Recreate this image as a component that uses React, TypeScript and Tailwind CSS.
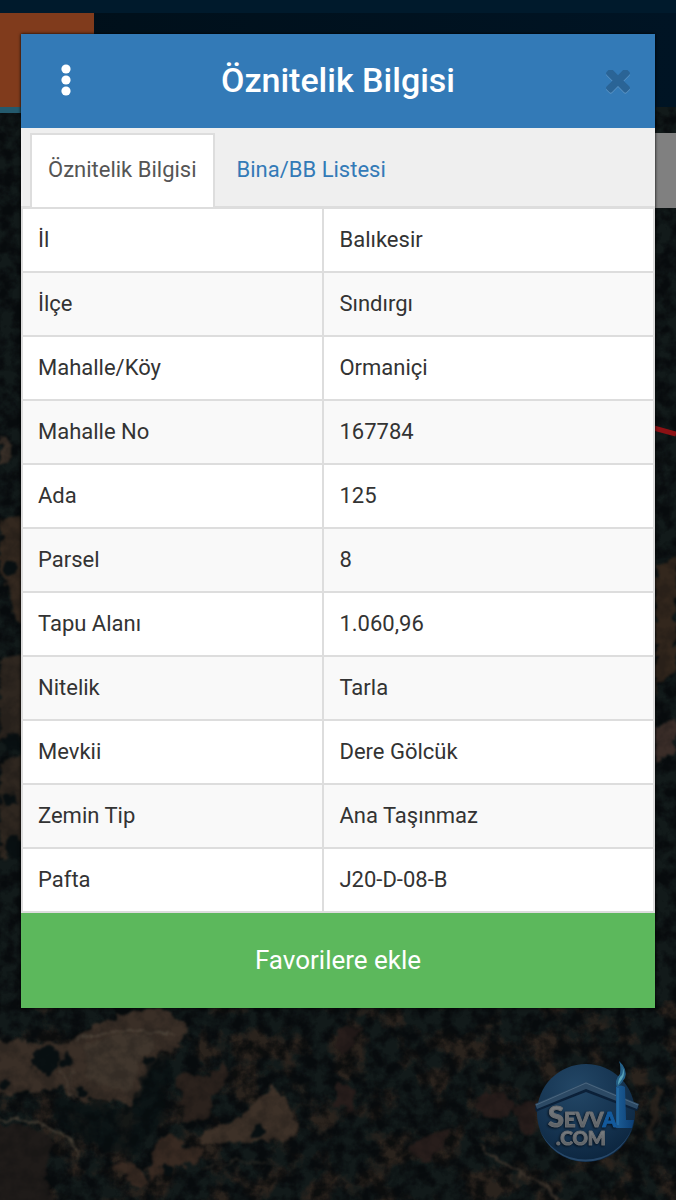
import React, { useState } from 'react';

interface Attribute {
  label: string;
  value: string;
}

const attributes: Attribute[] = [
  { label: 'İl', value: 'Balıkesir' },
  { label: 'İlçe', value: 'Sındırgı' },
  { label: 'Mahalle/Köy', value: 'Ormaniçi' },
  { label: 'Mahalle No', value: '167784' },
  { label: 'Ada', value: '125' },
  { label: 'Parsel', value: '8' },
  { label: 'Tapu Alanı', value: '1.060,96' },
  { label: 'Nitelik', value: 'Tarla' },
  { label: 'Mevkii', value: 'Dere Gölcük' },
  { label: 'Zemin Tip', value: 'Ana Taşınmaz' },
  { label: 'Pafta', value: 'J20-D-08-B' },
];

const tabs = [
  { id: 'attributes', label: 'Öznitelik Bilgisi' },
  { id: 'buildings', label: 'Bina/BB Listesi' },
];

const SatelliteMap: React.FC = () => (
  <svg
    className="absolute inset-0 w-full h-full"
    viewBox="0 0 676 1200"
    preserveAspectRatio="xMidYMid slice"
    aria-hidden="true"
  >
    <defs>
      <filter id="rough" x="-10%" y="-10%" width="120%" height="120%" colorInterpolationFilters="sRGB">
        <feTurbulence type="fractalNoise" baseFrequency="0.09" numOctaves="3" seed="4" result="n" />
        <feDisplacementMap in="SourceGraphic" in2="n" scale="14" xChannelSelector="R" yChannelSelector="G" />
        <feGaussianBlur stdDeviation="1.1" />
      </filter>
      <filter id="trees" x="0" y="0" width="100%" height="100%" colorInterpolationFilters="sRGB">
        <feTurbulence type="fractalNoise" baseFrequency="0.07" numOctaves="4" seed="11" />
        <feColorMatrix values="0 0 0 0 0.02  0 0 0 0 0.03  0 0 0 0 0.04  0 3 0 0 -1.1" />
      </filter>
      <filter id="scrub" x="0" y="0" width="100%" height="100%" colorInterpolationFilters="sRGB">
        <feTurbulence type="fractalNoise" baseFrequency="0.03" numOctaves="5" seed="23" />
        <feColorMatrix values="0 0 0 0 0.2  0 0 0 0 0.15  0 0 0 0 0.12  5 0 0 0 -2.4" />
      </filter>
    </defs>
    <rect width="676" height="1200" fill="#121a1a" />
    <rect y="1000" width="676" height="200" filter="url(#scrub)" opacity="0.75" />
    <rect width="676" height="1200" filter="url(#trees)" opacity="0.7" />

    {/* Tarlalar */}
    <g filter="url(#rough)">
      <path d="M0 438l14 8-4 14-10 4z" fill="#3c322a" />
      <path d="M0 520l24-4v112l-12-18-4-30-8-6z" fill="#33281f" />
      <path d="M0 660l24-6v84l-24 2zM0 765l24-12v84l-24 28z" fill="#2f2720" />
      <path d="M655 565l21-8v110l-21 24z" fill="#33271d" />
      <path d="M655 728l21-10v34l-21 8z" fill="#3a2d28" />
      <path d="M-4 1040l30 2 40 2 30-18 30-14 36-4 18 12 10 16-10 8-16 6-14 18-10 24-12 14-22-6-24-2-24-10-24 4-40 4z" fill="#3a2f27" />
      <path d="M84 1044l40-12 34 4-14 22-14 34-42-10z" fill="#40362d" />
      <path d="M202 1132l40-14 30-32 12 10 16 30-12 14-88 4z" fill="#3d3128" />
      <path d="M152 1148l14-12 40 16-10 12-24 2-14 12-10-6zM112 1164l20-4 20 24-14 4z" fill="#382a22" />
      <path d="M174 1078l16-8 18 8 18-18v20l-14 20-4 18-26 6 2-18z" fill="#2b221d" />
      <path d="M-4 1124l40 4 16 14-8 32 10 30H-4z" fill="#1f1b19" />
      <path d="M404 1150l24-14 26-10-12 22-16 12zM476 1100l20-8 20 12-10 12-26-2zM336 1080l18 10-4 20-14-4zM336 1030l24-4-6 20-18 10zM512 1108l28-8-6 34-14-2z" fill="#271d1b" />
      <path d="M650 1104l8-20 4 14-10 44-6-2 6-22z" fill="#29231d" />
    </g>
    <g fill="#091012" filter="url(#rough)">
      <circle cx="46" cy="1061" r="14" />
      <circle cx="67" cy="1060" r="6" />
      <circle cx="5" cy="1084" r="6" />
      <circle cx="81" cy="1091" r="5" />
      <circle cx="149" cy="1060" r="4" />
      <circle cx="258" cy="1132" r="7" />
      <circle cx="166" cy="1170" r="6" />
      <circle cx="10" cy="568" r="7" />
      <circle cx="12" cy="742" r="9" />
      <circle cx="8" cy="800" r="7" />
      <circle cx="14" cy="846" r="10" />
      <path d="M52 1100l8-4 14 10 28-4 14 6 14-2 6-12 10-26 12-10 10-4 4 20-10 24 6 20-18 16-20 22-20-4-30-16-28-20z" opacity="0.6" />
    </g>
    <g fill="none" filter="url(#rough)">
      <path d="M-4 1119q38-2 58 12 18 6 26 26" stroke="#453e34" strokeWidth="2.5" />
      <path d="M76 1042q50-20 100-6" stroke="#51473c" strokeWidth="2" />
      <path d="M480 1148q34 22 56 34 18 4 22 22" stroke="#3d352d" strokeWidth="3" />
      <path d="M202 1170q36-16 80-6" stroke="#2b2924" strokeWidth="2" />
      <path d="M62 1070l12 30M70 1070l8 26" stroke="#4e443a" strokeWidth="1" />
    </g>
    <rect width="676" height="1200" filter="url(#trees)" opacity="0.2" />

    {/* Parsel sınırı */}
    <path d="M650 427l26 7" stroke="#8c1114" strokeWidth="5" />
  </svg>
);

const SevvalLogo: React.FC = () => (
  <svg className="absolute right-9 bottom-9 w-[106px] h-[104px]" viewBox="0 0 106 104" role="img" aria-label="Sevval.com">
    <defs>
      <radialGradient id="disc" cx="0.4" cy="0.25" r="0.8">
        <stop offset="0" stopColor="#234766" />
        <stop offset="0.6" stopColor="#153350" />
        <stop offset="1" stopColor="#0b243d" />
      </radialGradient>
      <linearGradient id="metal" x1="0" y1="0" x2="0" y2="1">
        <stop offset="0" stopColor="#85888b" />
        <stop offset="1" stopColor="#54595e" />
      </linearGradient>
      <linearGradient id="candle" x1="0" y1="0" x2="1" y2="0">
        <stop offset="0" stopColor="#1d5f98" />
        <stop offset="1" stopColor="#0b3c71" />
      </linearGradient>
    </defs>
    <circle cx="52" cy="53" r="49" fill="url(#disc)" />
    <path d="M5 68a49 49 0 0 0 93 0a50 50 0 0 1-93 0z" fill="#27486a" />
    <path d="M1 47L52 26l53 21-2 4-6-2-45-17L6 50l-4 2z" fill="#0b2038" />
    <path d="M1 44L52 22l53 22-2 5-51-20L3 49z" fill="#2c4964" />
    <path d="M2 45L52 23l52 22" fill="none" stroke="#4a667f" strokeWidth="1" />
    <path d="M83 28q-3-8 3-14 1-8-1-13 9 8 6 17-3 5-8 10z" fill="#245f86" />
    <path d="M84 25q0-7 4-10 2-5 0-9 4 8 0 13-2 3-4 6z" fill="#59a2b8" />
    <path d="M82 27q5-3 9 0l1 33h8l-2 8H82z" fill="url(#candle)" />
    <path d="M84 28v37" stroke="#2b78b0" strokeWidth="1" />
    <g
      className="drop-shadow-[-1px_1px_1px_#06121f]"
      fontFamily="Lato, sans-serif"
      fontWeight="900"
      strokeWidth="1"
      strokeLinejoin="round"
    >
      <text x="14" y="67" fontSize="20" fill="url(#metal)" stroke="#6a6e72">
        <tspan fontSize="29">S</tspan>EVV<tspan fill="#145a9c" stroke="#145a9c">A</tspan>
      </text>
      <text x="22" y="85" fontSize="19" fill="url(#metal)" stroke="#6a6e72">.COM</text>
    </g>
  </svg>
);

const PageBackdrop: React.FC = () => (
  <div className="absolute inset-0 overflow-hidden">
    <SatelliteMap />
    <div className="relative">
      <div className="h-[13px] bg-[#001a2c]" />
      <div className="h-[94px] bg-linear-to-r from-[#000f19] to-[#001424]">
        <div className="w-[94px] h-full bg-[#803b1c]" />
      </div>
      <div className="w-[94px] h-[6px] bg-[#245a6d]" />
      <div className="mt-5 ml-auto w-20 h-[75px] bg-[#808080]" />
    </div>
    <SevvalLogo />
  </div>
);

const MenuIcon: React.FC = () => (
  <svg className="w-[10px] h-8" viewBox="0 0 10 32" fill="currentColor" aria-hidden="true">
    <circle cx="5" cy="5" r="4.6" />
    <circle cx="5" cy="16" r="4.6" />
    <circle cx="5" cy="27" r="4.6" />
  </svg>
);

const CloseIcon: React.FC = () => (
  <svg
    className="w-6 h-6 drop-shadow-[0_1px_0_#5b94c5]"
    viewBox="110 326 1188 1188"
    fill="currentColor"
    aria-hidden="true"
  >
    <path d="M1298 1214q0 40-28 68l-136 136q-28 28-68 28t-68-28l-294-294-294 294q-28 28-68 28t-68-28l-136-136q-28-28-28-68t28-68l294-294-294-294q-28-28-28-68t28-68l136-136q28-28 68-28t68 28l294 294 294-294q28-28 68-28t68 28l136 136q28 28 28 68t-28 68l-294 294 294 294q28 28 28 68z" />
  </svg>
);

export default function App() {
  const [activeTab, setActiveTab] = useState('attributes');

  return (
    <div className="relative min-h-screen bg-[#0c1413] font-['Roboto',sans-serif] text-[#333333]">
      <PageBackdrop />

      <div className="relative px-[21px] pt-[34px] pb-12">
        <section role="dialog" aria-labelledby="dialog-title" className="bg-white shadow-[0_0_3px_#000000]">
          {/* Header */}
          <header className="flex items-center justify-between h-[94px] px-[25px] pb-0.5 bg-[#337ab7] text-white">
            <button type="button" aria-label="Menü" className="flex justify-center w-10">
              <MenuIcon />
            </button>
            <h1 id="dialog-title" className="text-[34px] leading-10 font-medium">
              Öznitelik Bilgisi
            </h1>
            <button type="button" aria-label="Kapat" className="flex justify-end w-10 pt-1 text-[#2a6496]">
              <CloseIcon />
            </button>
          </header>

          {/* Tabs */}
          <div role="tablist" className="flex h-[79px] pt-[5px] pl-[9px] bg-[#efefef] border-b border-[#dddddd]">
            {tabs.map((tab) => (
              <button
                key={tab.id}
                type="button"
                role="tab"
                aria-selected={tab.id === activeTab}
                onClick={() => setActiveTab(tab.id)}
                className={`-mb-px mr-1 px-4 pb-0.5 border-2 border-b-0 text-[22px] leading-8 ${
                  tab.id === activeTab
                    ? 'bg-white border-[#dddddd] text-[#555555]'
                    : 'border-transparent text-[#337ab7]'
                }`}
              >
                {tab.label}
              </button>
            ))}
          </div>

          {/* Attribute table */}
          <table className="w-full table-fixed border-collapse text-[22px] leading-8">
            <tbody>
              {attributes.map((attribute) => (
                <tr key={attribute.label} className="h-16 even:bg-[#f9f9f9]">
                  <th scope="row" className="w-[47.7%] px-[15px] border-2 border-[#dddddd] text-left font-normal">
                    {attribute.label}
                  </th>
                  <td className="px-[15px] border-2 border-[#dddddd]">{attribute.value}</td>
                </tr>
              ))}
            </tbody>
          </table>

          <button type="button" className="block w-full h-[95px] pb-0.5 bg-[#5cb85c] text-[26px] leading-8 text-white">
            Favorilere ekle
          </button>
        </section>
      </div>
    </div>
  );
}
